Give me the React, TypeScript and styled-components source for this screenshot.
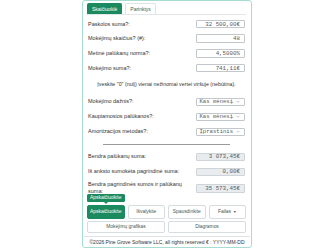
import React from "react";
import styled, { createGlobalStyle } from "styled-components";

const Global = createGlobalStyle`
  html, body { margin: 0; padding: 0; background: #ffffff; }
  body { font-family: "Liberation Sans", Arial, sans-serif; color: #333; }
  * { box-sizing: border-box; }
`;

const GREEN = "#1b8a5e";

const Card = styled.div`
  width: 170px;
  margin: 0 auto;
  border: 1px solid #a6ddd0;
  border-radius: 3px;
  padding: 2px 5px 2px 4px;
`;

const TabList = styled.div`
  display: flex;
  gap: 3px;
  border-bottom: 1px solid #e3e6e8;
`;

const Tab = styled.button<{ $active?: boolean }>`
  height: 11px;
  padding: 0 4px;
  margin: 0;
  font-family: "Liberation Sans", Arial, sans-serif;
  font-size: 5px;
  line-height: 9px;
  border-radius: 2px 2px 0 0;
  border: 1px solid ${(p) => (p.$active ? GREEN : "#dfe3e5")};
  border-bottom: none;
  background: ${(p) => (p.$active ? GREEN : "#fff")};
  color: ${(p) => (p.$active ? "#fff" : "#2e6a55")};
`;

const Panel = styled.div`
  display: flex;
  flex-direction: column;
  padding-top: 4.5px;
`;

const Row = styled.div<{ $mt?: number; $tall?: boolean }>`
  display: flex;
  align-items: center;
  justify-content: space-between;
  height: ${(p) => (p.$tall ? "14px" : "9px")};
  margin-top: ${(p) => p.$mt ?? 0}px;
  padding-left: 1px;
`;

const Label = styled.label`
  font-size: 5.5px;
  line-height: 7px;
  color: #333;
  max-width: 104px;
`;

const Field = styled.input<{ $readonly?: boolean }>`
  width: 49px;
  height: 8.5px;
  margin: 0 1px 0 0;
  border: 1px solid ${(p) => (p.$readonly ? "#cfd4d8" : "#c2c7cc")};
  border-radius: 1px;
  background: ${(p) => (p.$readonly ? "#e9ecef" : "#fff")};
  font-family: "Liberation Mono", "DejaVu Sans Mono", monospace;
  font-size: 5.8px;
  color: #5a5a5a;
  text-align: right;
  padding: 0 4px 0 2px;
  outline: none;
`;

const SelectBox = styled.div`
  display: flex;
  align-items: center;
  justify-content: space-between;
  width: 49px;
  height: 8.5px;
  margin-right: 1px;
  border: 1px solid #c2c7cc;
  border-radius: 1px;
  background: #fff;
  padding: 0 4px 0 2.5px;
  font-family: "Liberation Mono", "DejaVu Sans Mono", monospace;
  font-size: 5.6px;
  color: #5a5a5a;
  white-space: nowrap;
`;

const Chevron = styled.svg`
  width: 4px;
  height: 3px;
  flex: none;
`;

const Note = styled.p`
  margin: 8px 0 0 0;
  font-size: 5.3px;
  line-height: 7px;
  text-align: center;
  color: #333;
`;

const Rule = styled.hr`
  width: 80%;
  margin: 8px auto 0 auto;
  border: none;
  border-top: 1px solid #9a9a9a;
  height: 0;
`;

const Buttons = styled.div`
  display: grid;
  grid-template-columns: repeat(4, 1fr);
  grid-template-rows: 14px 12.5px;
  column-gap: 3px;
  row-gap: 1.7px;
  margin-top: 9.5px;
`;

const Btn = styled.button<{ $primary?: boolean; $span?: number }>`
  position: relative;
  grid-column: span ${(p) => p.$span ?? 1};
  margin: 0;
  padding: 0;
  border-radius: 2px;
  border: 1px solid ${(p) => (p.$primary ? GREEN : "#d7dcdf")};
  background: ${(p) => (p.$primary ? GREEN : "#fff")};
  color: ${(p) => (p.$primary ? "#fff" : "#3f5a50")};
  font-family: "Liberation Sans", Arial, sans-serif;
  font-size: 4.9px;
`;

const Tip = styled.span`
  position: absolute;
  left: -1px;
  right: -1px;
  bottom: calc(100% + 3.5px);
  height: 8.5px;
  line-height: 8.5px;
  background: ${GREEN};
  color: #fff;
  border-radius: 1.5px;
  font-size: 4.9px;
  text-align: center;
  &::after {
    content: "";
    position: absolute;
    left: 50%;
    top: 100%;
    margin-left: -2px;
    border-left: 2px solid transparent;
    border-right: 2px solid transparent;
    border-top: 2.5px solid ${GREEN};
  }
`;

const Caret = styled.span`
  font-size: 3.5px;
  margin-left: 2px;
  vertical-align: 0.5px;
`;

const Footer = styled.div`
  margin-top: 2.5px;
  border-top: 1px solid #e0e3e5;
  padding-top: 2.5px;
  margin-left: -3px;
  margin-right: -4px;
  font-size: 5px;
  line-height: 6px;
  text-align: center;
  color: #333;
  white-space: nowrap;
`;

const inputs = [
  { label: "Paskolos suma?:", value: "32 500,00€" },
  { label: "Mokėjimų skaičius? (#):", value: "48" },
  { label: "Metinė palūkanų norma?:", value: "4,5000%" },
  { label: "Mokėjimo suma?:", value: "741,11€" },
];

const selects = [
  { label: "Mokėjimo dažnis?:", value: "Kas mėnesį" },
  { label: "Kaupiamosios palūkanos?:", value: "Kas mėnesį" },
  { label: "Amortizacijos metodas?:", value: "Įprastinis" },
];

const DownChevron = () => (
  <Chevron viewBox="0 0 8 5">
    <path d="M1 1 L4 4 L7 1" fill="none" stroke="#888" strokeWidth="1" />
  </Chevron>
);

export default function App() {
  return (
    <>
      <Global />
      <Card>
        <TabList>
          <Tab $active>Skaičiuoklė</Tab>
          <Tab>Parinktys</Tab>
        </TabList>
        <Panel>
          {inputs.map((f, i) => (
            <Row key={f.label} $mt={i === 0 ? 0 : 5.7}>
              <Label>{f.label}</Label>
              <Field defaultValue={f.value} />
            </Row>
          ))}
          <Note>Įveskite "0" (nulį) vienai nežinomai vertei viršuje (nebūtina).</Note>
          {selects.map((s, i) => (
            <Row key={s.label} $mt={i === 0 ? 9.9 : 6}>
              <Label>{s.label}</Label>
              <SelectBox role="combobox">
                <span>{s.value}</span>
                <DownChevron />
              </SelectBox>
            </Row>
          ))}
          <Rule />
          <Row $mt={7}>
            <Label>Bendra palūkanų suma:</Label>
            <Field $readonly readOnly defaultValue="3 073,45€" />
          </Row>
          <Row $mt={6}>
            <Label>Iš anksto sumokėta pagrindinė suma:</Label>
            <Field $readonly readOnly defaultValue="0,00€" />
          </Row>
          <Row $mt={5} $tall>
            <Label>Bendra pagrindinės sumos ir palūkanų suma:</Label>
            <Field $readonly readOnly defaultValue="35 573,45€" />
          </Row>
          <Buttons>
            <Btn $primary>
              <Tip>Apskaičiuokite</Tip>
              Apskaičiuokite
            </Btn>
            <Btn>Išvalykite</Btn>
            <Btn>Spausdinkite</Btn>
            <Btn>
              Failas<Caret>▼</Caret>
            </Btn>
            <Btn $span={2}>Mokėjimų grafikas</Btn>
            <Btn $span={2}>Diagramos</Btn>
          </Buttons>
          <Footer>©2026 Pine Grove Software LLC, all rights reserved € : YYYY-MM-DD</Footer>
        </Panel>
      </Card>
    </>
  );
}
